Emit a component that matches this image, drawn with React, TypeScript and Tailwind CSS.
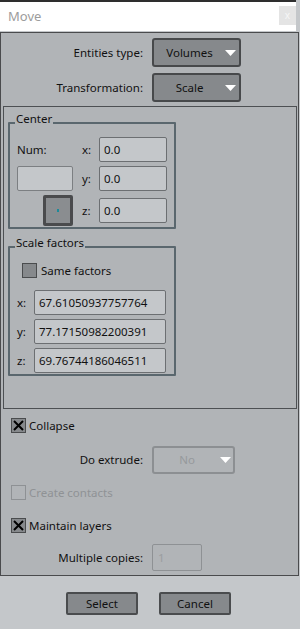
import React from 'react';

const Arrow: React.FC = () => (
  <svg width="11" height="6" viewBox="0 0 11 6" className="shrink-0">
    <polygon points="0,0 11,0 5.5,6" fill="#ffffff" />
  </svg>
);

const Dropdown: React.FC<{ text: string; disabled?: boolean }> = ({ text, disabled }) => (
  <div
    className={
      disabled
        ? 'flex h-[28px] w-[83px] items-center rounded-[3px] border-2 border-[#8c8f92] bg-[#b1b4b7] pr-[2px] text-[#96999c]'
        : 'flex h-[29px] w-[89px] items-center rounded-[3px] border-2 border-[#47494b] bg-[#86898c] pr-[3px] text-[#111]'
    }
  >
    <span className="flex-1 text-center">{text}</span>
    <Arrow />
  </div>
);

const Input: React.FC<{ value: string; w: string }> = ({ value, w }) => (
  <div className={`flex h-[25px] items-center rounded-[2px] border border-[#6c6f72] bg-[#c4c7ca] pl-[4px] text-[#111] ${w}`}>
    {value}
  </div>
);

const Check: React.FC<{ checked?: boolean; disabled?: boolean }> = ({ checked, disabled }) => (
  <div
    className={
      disabled
        ? 'h-[15px] w-[15px] shrink-0 border border-[#8e9194]'
        : 'flex h-[15px] w-[15px] shrink-0 items-center justify-center border border-[#4a4c4e] bg-[#86898c]'
    }
  >
    {checked && (
      <svg width="11" height="11" viewBox="0 0 11 11">
        <path d="M1 1 L10 10 M10 1 L1 10" stroke="#000" strokeWidth="2" />
      </svg>
    )}
  </div>
);

const Group: React.FC<{ title: string; children: React.ReactNode; className?: string }> = ({ title, children, className }) => (
  <div className={`relative ml-[4px] w-[168px] rounded-[1px] border-2 border-[#5a676e] ${className ?? ''}`}>
    <span className="absolute -top-[13px] left-[5px] bg-[#b1b4b7] px-px leading-[16px]">{title}</span>
    {children}
  </div>
);

const App: React.FC = () => {
  return (
    <div className="flex h-[629px] w-[300px] flex-col overflow-hidden bg-[#c4c7ca] font-['Noto_Sans',sans-serif] text-[11.5px] text-[#111]">
      {/* window top edge */}
      <div className="h-[2px] w-[296px] bg-[#2e2e2e]" />

      {/* title bar */}
      <div className="flex h-[29px]">
        <div className="flex w-[296px] items-center justify-between bg-white pl-[8px]">
          <span className="text-[13px] text-[#9c9c9c]">Move</span>
          <div className="mb-[3px] flex h-[19px] w-[17px] items-center justify-center bg-[#e4e4e4] text-[10px] leading-none text-[#f6f6f6]">
            x
          </div>
        </div>
      </div>
      <div className="h-[1px]" />

      {/* main panel */}
      <div className="flex h-[544px] w-[299px] flex-col border border-[#4a4b4d] bg-[#b1b4b7]">
        <div className="mt-[5px] flex items-center">
          <div className="w-[142px] text-right">Entities type:</div>
          <div className="ml-[9px]">
            <Dropdown text="Volumes" />
          </div>
        </div>
        <div className="mt-[6px] flex items-center">
          <div className="w-[142px] text-right">Transformation:</div>
          <div className="ml-[9px]">
            <Dropdown text="Scale" />
          </div>
        </div>

        {/* parameters panel */}
        <div className="ml-[2px] mt-[4px] h-[303px] w-[294px] border border-[#4d5053]">
          <Group title="Center" className="mt-[15px]">
            <div className="grid grid-cols-[56px_26px_68px] grid-rows-[25px_25px_31px] gap-y-[4px] pb-[1px] pl-[7px] pt-[13px]">
              <div className="flex items-center">Num:</div>
              <div className="flex items-center pl-[9px]">x:</div>
              <Input value="0.0" w="w-[68px]" />

              <div className="h-[25px] w-[56px] rounded-[2px] border border-[#7c7f82] bg-[#c4c7ca]" />
              <div className="flex items-center pl-[9px]">y:</div>
              <Input value="0.0" w="w-[68px]" />

              <div className="flex justify-end">
                <div className="flex h-[31px] w-[30px] items-center justify-center rounded-[2px] border-[3px] border-[#4a4b4d] bg-[#8a8d90]">
                  <div className="h-[3px] w-[2px] bg-[#1d8a99]" />
                </div>
              </div>
              <div className="flex items-center pl-[9px]">z:</div>
              <div className="flex items-center">
                <Input value="0.0" w="w-[68px]" />
              </div>
            </div>
          </Group>

          <Group title="Scale factors" className="mt-[17px]">
            <div className="flex flex-col pb-[1px] pt-[14px]">
              <div className="flex items-center pl-[12px]">
                <Check />
                <span className="ml-[4px]">Same factors</span>
              </div>
              <div className="mt-[11px] flex flex-col gap-[4px]">
                {[
                  ['x:', '67.61050937757764'],
                  ['y:', '77.17150982200391'],
                  ['z:', '69.76744186046511'],
                ].map(([l, v]) => (
                  <div key={l} className="flex items-center">
                    <span className="w-[24px] pl-[7px]">{l}</span>
                    <Input value={v} w="w-[132px]" />
                  </div>
                ))}
              </div>
            </div>
          </Group>
        </div>

        <div className="ml-[10px] mt-[9px] flex h-[15px] items-center">
          <Check checked />
          <span className="ml-[3px]">Collapse</span>
        </div>

        <div className="mt-[13px] flex items-center">
          <div className="w-[142px] text-right">Do extrude:</div>
          <div className="ml-[9px]">
            <Dropdown text="No" disabled />
          </div>
        </div>

        <div className="ml-[10px] mt-[11px] flex h-[15px] items-center">
          <Check disabled />
          <span className="ml-[3px] text-[#8f9295]">Create contacts</span>
        </div>

        <div className="ml-[10px] mt-[18px] flex h-[15px] items-center">
          <Check checked />
          <span className="ml-[3px]">Maintain layers</span>
        </div>

        <div className="mt-[11px] flex items-center">
          <div className="w-[142px] text-right">Multiple copies:</div>
          <div className="ml-[9px] flex h-[27px] w-[50px] items-center rounded-[2px] border border-[#8e9194] pl-[5px] text-[#9a9da0]">
            1
          </div>
        </div>
      </div>

      {/* footer buttons */}
      <div className="mt-[16px] flex justify-center gap-[21px] pr-[3px]">
        <button className="h-[23px] w-[72px] rounded-[2px] border-2 border-[#4a4c4e] bg-[#86898c] text-[#111]">Select</button>
        <button className="h-[23px] w-[72px] rounded-[2px] border-2 border-[#4a4c4e] bg-[#86898c] text-[#111]">Cancel</button>
      </div>
    </div>
  );
};

export default App;
